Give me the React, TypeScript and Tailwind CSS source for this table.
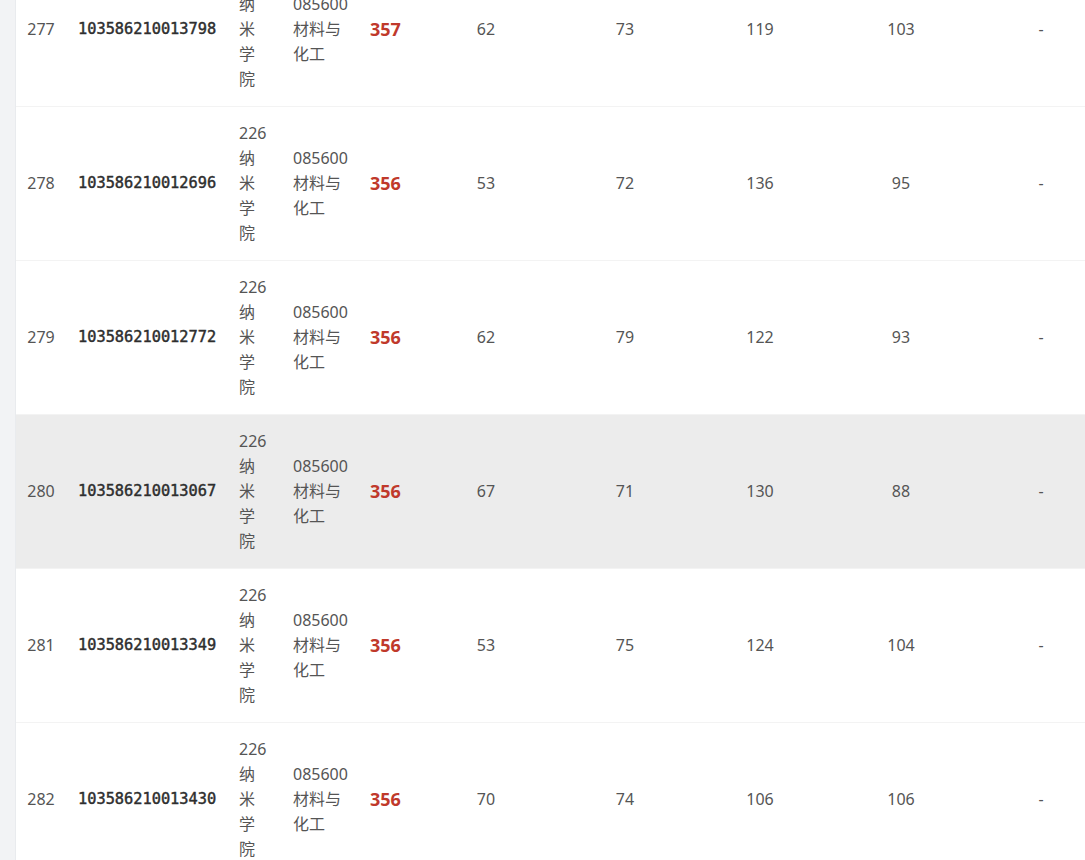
const rows = [
  { rank: 277, id: "103586210013798", total: 357, a: 62, b: 73, c: 119, d: 103 },
  { rank: 278, id: "103586210012696", total: 356, a: 53, b: 72, c: 136, d: 95 },
  { rank: 279, id: "103586210012772", total: 356, a: 62, b: 79, c: 122, d: 93 },
  { rank: 280, id: "103586210013067", total: 356, a: 67, b: 71, c: 130, d: 88 },
  { rank: 281, id: "103586210013349", total: 356, a: 53, b: 75, c: 124, d: 104 },
  { rank: 282, id: "103586210013430", total: 356, a: 70, b: 74, c: 106, d: 106 },
];

const sans = { fontFamily: '"Noto Sans", "Noto Sans CJK SC", sans-serif' };

export default function App() {
  return (
    <div className="flex h-[860px] w-[1085px] overflow-hidden bg-white" style={sans}>
      <div className="w-4 shrink-0 border-r border-[#e9ebee] bg-[#f2f3f5]" />
      <div className="mt-[-47px] w-[1090px] shrink-0">
        {rows.map((r) => (
          <div
            key={r.rank}
            className={`grid grid-cols-[50px_162px_53px_77px_58px_140px_138px_132px_150px_130px] items-center border-b border-[#f3f3f3] py-[14px] text-[16px] leading-[25px] text-[#555] ${
              r.rank === 280 ? "bg-[#ececec]" : ""
            }`}
          >
            <div className="text-center">{r.rank}</div>
            <div
              className="pl-3 text-[15.3px] text-[#2e2e2e] [-webkit-text-stroke:0.45px_#2e2e2e]"
              style={{ fontFamily: '"DejaVu Sans Mono", "Liberation Mono", monospace' }}
            >
              {r.id}
            </div>
            <div className="pl-[11px] pr-3 break-all">226纳米学院</div>
            <div className="pl-3 pr-[5px]">085600材料与化工</div>
            <div className="pl-3 text-[18px] font-bold text-[#c0392b]">{r.total}</div>
            <div className="text-center">{r.a}</div>
            <div className="text-center">{r.b}</div>
            <div className="text-center">{r.c}</div>
            <div className="text-center">{r.d}</div>
            <div className="text-center">-</div>
          </div>
        ))}
      </div>
    </div>
  );
}
